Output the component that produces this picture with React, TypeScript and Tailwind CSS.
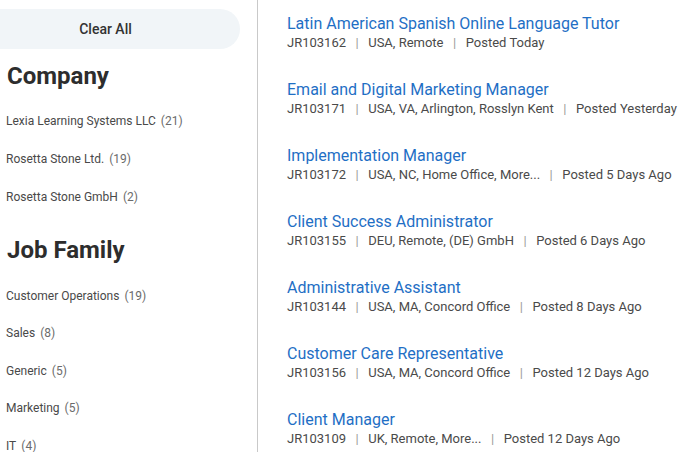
import React from "react";

const companies = [
  { name: "Lexia Learning Systems LLC", count: 21 },
  { name: "Rosetta Stone Ltd.", count: 19 },
  { name: "Rosetta Stone GmbH", count: 2 },
];

const families = [
  { name: "Customer Operations", count: 19 },
  { name: "Sales", count: 8 },
  { name: "Generic", count: 5 },
  { name: "Marketing", count: 5 },
  { name: "IT", count: 4 },
];

const jobs = [
  { title: "Latin American Spanish Online Language Tutor", id: "JR103162", loc: "USA, Remote", posted: "Posted Today" },
  { title: "Email and Digital Marketing Manager", id: "JR103171", loc: "USA, VA, Arlington, Rosslyn Kent", posted: "Posted Yesterday" },
  { title: "Implementation Manager", id: "JR103172", loc: "USA, NC, Home Office, More...", posted: "Posted 5 Days Ago" },
  { title: "Client Success Administrator", id: "JR103155", loc: "DEU, Remote, (DE) GmbH", posted: "Posted 6 Days Ago" },
  { title: "Administrative Assistant", id: "JR103144", loc: "USA, MA, Concord Office", posted: "Posted 8 Days Ago" },
  { title: "Customer Care Representative", id: "JR103156", loc: "USA, MA, Concord Office", posted: "Posted 12 Days Ago" },
  { title: "Client Manager", id: "JR103109", loc: "UK, Remote, More...", posted: "Posted 12 Days Ago" },
];

function Sep() {
  return <span className="mx-[9.5px] text-[#9a9a9a]">|</span>;
}

export default function App() {
  return (
    <div
      className="flex h-[452px] w-[681px] overflow-hidden bg-white"
      style={{ fontFamily: "Roboto, 'Noto Sans', sans-serif" }}
    >
      <aside className="h-full w-[258px] shrink-0 border-r border-[#c9c9c9] pt-[9px]">
        <div className="-ml-[29px] flex h-[40px] w-[269px] items-center justify-center rounded-full bg-[#f1f5f8] text-[14px] font-medium text-[#333333]">
          Clear All
        </div>
        <h2 className="mt-[5px] flex h-[44px] items-center pl-[7px] text-[24px] font-bold text-[#2d2d2d]">
          Company
        </h2>
        <ul className="mt-[4px]">
          {companies.map((c) => (
            <li key={c.name} className="flex h-[38px] items-center pl-[6px] text-[12px] text-[#494949]">
              {c.name}
              <span className="ml-[5px] text-[#6b6b6b]">({c.count})</span>
            </li>
          ))}
        </ul>
        <h2 className="mt-[12px] flex h-[44px] items-center pl-[7px] text-[24px] font-bold text-[#2d2d2d]">
          Job Family
        </h2>
        <ul className="mt-[5px]">
          {families.map((c) => (
            <li key={c.name} className="flex h-[37.5px] items-center pl-[6px] text-[12px] text-[#494949]">
              {c.name}
              <span className="ml-[5px] text-[#6b6b6b]">({c.count})</span>
            </li>
          ))}
        </ul>
      </aside>
      <main className="flex-1 pl-[29px]">
        {jobs.map((j) => (
          <div key={j.id} className="h-[66px] pt-[14px]">
            <div className="whitespace-nowrap text-[16px] leading-[19px] text-[#1f6fc5]">{j.title}</div>
            <div className="whitespace-nowrap text-[13px] leading-[20px] text-[#4a4a4a]">
              {j.id}
              <Sep />
              {j.loc}
              <Sep />
              {j.posted}
            </div>
          </div>
        ))}
      </main>
    </div>
  );
}
